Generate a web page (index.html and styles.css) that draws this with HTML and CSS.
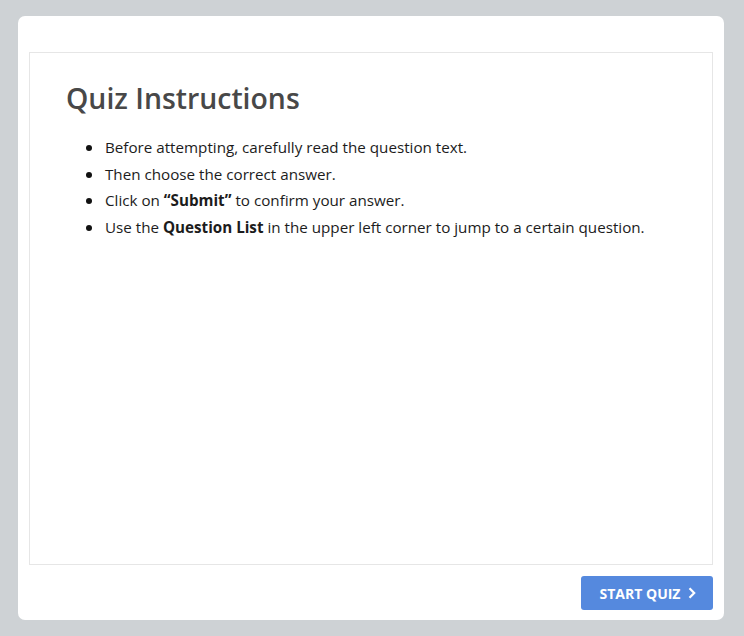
FILE: index.html
```html
<!DOCTYPE html>
<html>
<head>
<meta charset="utf-8">
<link rel="stylesheet" href="styles.css">
</head>
<body>
<div class="card">
  <div class="content">
    <h1 class="title">Quiz Instructions</h1>
    <ul class="list">
      <li>Before attempting, carefully read the question text.</li>
      <li>Then choose the correct answer.</li>
      <li>Click on <b>“Submit”</b> to confirm your answer.</li>
      <li>Use the <b>Question List</b> in the upper left corner to jump to a certain question.</li>
    </ul>
  </div>
  <div class="footer">
    <button class="start">START QUIZ
      <svg class="chev" width="8" height="12" viewBox="0 0 8 12"><path d="M1.5 1.2 L6.2 6 L1.5 10.8" fill="none" stroke="#fff" stroke-width="2.2"/></svg>
    </button>
  </div>
</div>
</body>
</html>
```
FILE: styles.css
```css
html, body {
  margin: 0;
  padding: 0;
  background: #ced2d5;
  font-family: "Open Sans", sans-serif;
}
.card {
  margin: 16px 20px 0 18px;
  height: 604px;
  box-sizing: border-box;
  background: #fff;
  border-radius: 7px;
  padding: 36px 11px 10px 11px;
  display: flex;
  flex-direction: column;
}
.content {
  height: 513px;
  box-sizing: border-box;
  border: 1px solid #e6e6e6;
  padding: 25px 36px 0 36px;
}
.title {
  margin: 0;
  font-size: 28.4px;
  font-weight: 600;
  color: #484848;
  line-height: 40px;
}
.list {
  list-style: none;
  margin: 16px 0 0 0;
  padding-left: 39px;
  font-size: 15.2px;
  line-height: 26.7px;
  color: #1c1c1c;
}
.list li {
  position: relative;
}
.list li::before {
  content: "";
  position: absolute;
  left: -19px;
  top: 11px;
  width: 6px;
  height: 6px;
  border-radius: 50%;
  background: #111;
}
.list b { font-weight: 700; }
.footer {
  display: flex;
  justify-content: flex-end;
  margin-top: 11px;
}
.start {
  width: 132px;
  height: 34px;
  border: none;
  border-radius: 3px;
  background: #5589de;
  color: #fff;
  font-family: "Open Sans", sans-serif;
  font-weight: 700;
  font-size: 14px;
  display: flex;
  align-items: center;
  justify-content: center;
  gap: 8px;
  padding: 0 0 0 2px;
}
```
